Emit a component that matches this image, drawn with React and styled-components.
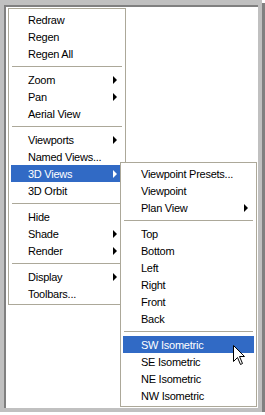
import React from 'react';
import styled, { createGlobalStyle } from 'styled-components';

const Global = createGlobalStyle`
  html, body {
    margin: 0;
    padding: 0;
    background: #ffffff;
    overflow: hidden;
  }
`;

const Frame = styled.div`
  width: 262px;
  height: 412px;
  box-sizing: border-box;
  padding: 5px 4px 4px 4px;
  background: #c0c0c0;
  box-shadow: 3px 3px 0 #808080;
`;

const Canvas = styled.div`
  box-sizing: border-box;
  width: 254px;
  height: 403px;
  border-top: 2px solid #808080;
  border-left: 2px solid #808080;
  background: #ffffff;
  padding: 1px 0 0 2px;
`;

const Menu = styled.div`
  position: relative;
  box-sizing: border-box;
  width: ${p => p.$width}px;
  border: 1px solid #aca899;
  background: #ffffff;
  padding: 2px;
  font-family: "Liberation Sans", Arial, sans-serif;
  font-size: 11px;
  letter-spacing: -0.25px;
  color: #000000;
`;

const SubMenu = styled(Menu)`
  position: absolute;
  left: 111px;
  top: 153px;
  z-index: 2;
`;

const Item = styled.div`
  position: relative;
  display: flex;
  align-items: center;
  justify-content: space-between;
  height: 17px;
  line-height: 17px;
  padding: 1px 6px 0 ${p => p.$indent}px;
  box-sizing: border-box;
  white-space: nowrap;
  background: ${p => (p.$active ? '#316ac5' : 'transparent')};
  color: ${p => (p.$active ? '#ffffff' : '#000000')};
`;

const Arrow = styled.span`
  width: 0;
  height: 0;
  margin-top: -1px;
  border-top: 4px solid transparent;
  border-bottom: 4px solid transparent;
  border-left: 4px solid ${p => (p.$active ? '#ffffff' : '#000000')};
`;

const Separator = styled.div`
  height: 9px;
  display: flex;
  align-items: center;
  margin: 0 1px;

  &::after {
    content: '';
    flex: 1;
    height: 1px;
    background: #aca899;
  }
`;

const Pointer = styled.svg`
  position: absolute;
  left: 110px;
  top: 9px;
  z-index: 3;
`;

const mainItems = [
  { label: 'Redraw' },
  { label: 'Regen' },
  { label: 'Regen All' },
  null,
  { label: 'Zoom', sub: true },
  { label: 'Pan', sub: true },
  { label: 'Aerial View' },
  null,
  { label: 'Viewports', sub: true },
  { label: 'Named Views...' },
  { label: '3D Views', sub: true, active: true },
  { label: '3D Orbit' },
  null,
  { label: 'Hide' },
  { label: 'Shade', sub: true },
  { label: 'Render', sub: true },
  null,
  { label: 'Display', sub: true },
  { label: 'Toolbars...' },
];

const viewItems = [
  { label: 'Viewpoint Presets...' },
  { label: 'Viewpoint' },
  { label: 'Plan View', sub: true },
  null,
  { label: 'Top' },
  { label: 'Bottom' },
  { label: 'Left' },
  { label: 'Right' },
  { label: 'Front' },
  { label: 'Back' },
  null,
  { label: 'SW Isometric', active: true, cursor: true },
  { label: 'SE Isometric' },
  { label: 'NE Isometric' },
  { label: 'NW Isometric' },
];

const CursorIcon = () => (
  <Pointer width="13" height="21" viewBox="0 0 13 21">
    <path
      d="M0.5 0.5 L0.5 16.5 L4.5 12.5 L7.5 19.5 L9.5 18.5 L6.5 11.5 L11.5 11.5 Z"
      fill="#ffffff"
      stroke="#000000"
      strokeWidth="1"
      strokeLinejoin="miter"
    />
  </Pointer>
);

const renderItems = (items, indent) =>
  items.map((it, i) =>
    it === null ? (
      <Separator key={i} />
    ) : (
      <Item key={i} $indent={indent} $active={it.active}>
        <span>{it.label}</span>
        {it.sub && <Arrow $active={it.active} />}
        {it.cursor && <CursorIcon />}
      </Item>
    )
  );

export default function App() {
  return (
    <>
      <Global />
      <Frame>
        <Canvas>
          <Menu $width={118}>
            {renderItems(mainItems, 17)}
            <SubMenu $width={137}>{renderItems(viewItems, 18)}</SubMenu>
          </Menu>
        </Canvas>
      </Frame>
    </>
  );
}
